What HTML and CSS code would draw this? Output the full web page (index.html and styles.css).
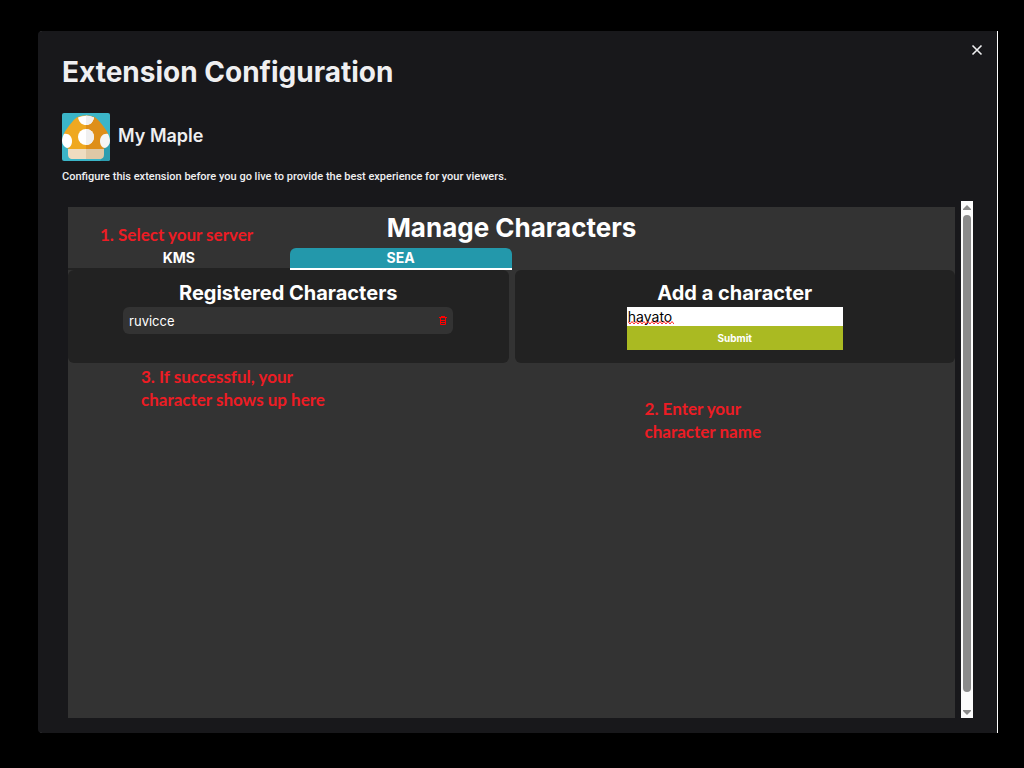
FILE: index.html
```html
<!DOCTYPE html>
<html lang="en">
<head>
<meta charset="utf-8">
<meta name="viewport" content="width=device-width, initial-scale=1">
<title>Extension Configuration</title>
<link rel="stylesheet" href="styles.css">
</head>
<body>
<main class="modal">
  <button class="close" type="button" aria-label="Close">
    <svg viewBox="0 0 12 12" width="12" height="12"><path d="M1.500 1.500l9 9M10.500 1.500l-9 9" stroke="#efeff1" stroke-width="1.600" fill="none"/></svg>
  </button>
  <h1 class="title">Extension Configuration</h1>
  <div class="extension">
    <svg class="logo" viewBox="0 0 48 48" role="img" aria-label="My Maple logo">
      <defs><clipPath id="cap"><path d="M24 2.500C18 2.500 14 4 10.500 8.500C7 13 3 17 1 23C0 29 3 36 8 36H40C45 36 48 29 47 23C45 17 41 13 37.500 8.500C34 4 30 2.500 24 2.500Z"/></clipPath></defs>
      <rect width="48" height="48" fill="#3bb5c8"/>
      <path d="M41 36L48 30V48H38L42 42Z" fill="#2c9db0"/>
      <g clip-path="url(#cap)">
        <rect width="24" height="36" fill="#efa820"/>
        <rect x="24" width="24" height="36" fill="#de8f1a"/>
      </g>
      <path d="M16 4.500Q24 1 32 4.500C31 9.500 28 12 24 12S17 9.500 16 4.500Z" fill="#fff"/>
      <path d="M24 2.500Q28 2.500 32 4.500C31 9.500 28 12 24 12Z" fill="#f0f0f0"/>
      <circle cx="24" cy="24" r="8" fill="#fff"/>
      <path d="M24 16a8 8 0 0 1 0 16z" fill="#f0f0f0"/>
      <path d="M2 21C7 20 10 24 10 28S8 35 5 35C2 34 0 31 0 28C0 25 1 23 2 21Z" fill="#fff"/>
      <path d="M46 21C41 20 38 24 38 28S40 35 43 35C46 34 48 31 48 28C48 25 47 23 46 21Z" fill="#f5f5f5"/>
      <path d="M6 36H24V46H11C7 46 6 44 6 41Z" fill="#efdcc0"/>
      <path d="M24 36H42V41C42 44 41 46 37 46H24Z" fill="#dfc8a6"/>
    </svg>
    <h2 class="name">My Maple</h2>
  </div>
  <p class="description">Configure this extension before you go live to provide the best experience for your viewers.</p>
  <div class="viewport">
    <section class="manager">
      <h2 class="heading">Manage Characters</h2>
      <nav class="tabs">
        <button class="tab" type="button">KMS</button>
        <button class="tab tab-active" type="button">SEA</button>
      </nav>
      <div class="cards">
        <section class="card">
          <h3 class="card-title">Registered Characters</h3>
          <div class="character">
            <span>ruvicce</span>
            <button class="delete" type="button" aria-label="Delete ruvicce">
              <svg viewBox="0 0 8 9" width="8" height="9"><path d="M0 1.500H8M2 .5H6M1.500 2V8.500H6.500V2M2 4.500H6M2 6.500H6" stroke="#f00" fill="none"/></svg>
            </button>
          </div>
        </section>
        <section class="card">
          <h3 class="card-title"><label for="character-name">Add a character</label></h3>
          <form class="form">
            <input class="field" id="character-name" type="text" value="hayato">
            <svg class="squiggle" viewBox="0 0 46 4" width="46" height="4" aria-hidden="true"><path d="M0 .5L2 3L4 .5L6 3L8 .5L10 3L12 .5L14 3L16 .5L18 3L20 .5L22 3L24 .5L26 3L28 .5L30 3L32 .5L34 3L36 .5L38 3L40 .5L42 3L44 .5L46 3" stroke="#f22" fill="none"/></svg>
            <button class="submit" type="button">Submit</button>
          </form>
        </section>
      </div>
      <p class="note note-server">1. Select your server</p>
      <p class="note note-name">2. Enter your<br>character name</p>
      <p class="note note-result">3. If successful, your<br>character shows up here</p>
    </section>
    <div class="scrollbar" aria-hidden="true">
      <svg viewBox="0 0 8 6" width="8" height="6"><path d="M4 0L8 4V5H0V4Z" fill="#8b8b8b"/></svg>
      <div class="thumb"></div>
      <svg viewBox="0 0 8 6" width="8" height="6"><path d="M4 6L8 2V1H0V2Z" fill="#8b8b8b"/></svg>
    </div>
  </div>
</main>
</body>
</html>
```

FILE: styles.css
```css
* { box-sizing: border-box; }
body {
  margin: 0;
  min-height: 100vh;
  display: flex;
  padding: 31px 27px 35px 38px;
  background: #000;
  color: #efeff1;
  font-family: Inter, sans-serif;
}
h1, h2, h3, p { margin: 0; }
button, input { margin: 0; border: 0; font-family: inherit; }
button { padding: 0; background: none; color: inherit; cursor: pointer; }
svg { display: block; }

.modal {
  position: relative;
  flex: 1;
  display: flex;
  flex-direction: column;
  padding: 24px 24px 15px;
  background: #18181b;
  border-radius: 4px 0 0 4px;
  box-shadow: 1px 0 #fff;
}
.close { position: absolute; top: 13px; right: 14px; }
.title { font-size: 28px; line-height: 34px; font-weight: 700; }
.extension { display: flex; align-items: center; gap: 8px; margin-top: 24px; }
.logo { width: 48px; height: 48px; border-radius: 2px; }
.name { font-size: 18px; line-height: 24px; font-weight: 600; padding-bottom: 3px; }
.description {
  margin-top: 8px;
  font-family: Roboto, sans-serif;
  font-size: 11px;
  line-height: 16px;
  font-weight: 500;
}

.viewport { flex: 1; display: flex; gap: 6px; margin-top: 16px; }
.manager {
  position: relative;
  flex: 1;
  margin: 6px 0 0 6px;
  background: #333;
  color: #fff;
}
.heading { padding-top: 4px; font-size: 26px; line-height: 33px; text-align: center; }
.tabs { display: grid; grid-template-columns: repeat(4, 1fr); margin-top: 4px; }
.tab {
  height: 22px;
  border-bottom: 2px solid #222;
  font-size: 14px;
  line-height: 20px;
  font-weight: 700;
}
.tab-active { background: #2398ab; border-color: #fff; border-radius: 6px 6px 0 0; }
.cards { display: grid; grid-template-columns: 1fr 1fr; gap: 6px; }
.card { padding: 9px 0 13px; background: #222; border-radius: 6px; }
.card-title { font-size: 20px; line-height: 28px; text-align: center; }
.character {
  display: flex;
  align-items: center;
  justify-content: space-between;
  width: 75%;
  height: 27px;
  margin: 0 auto;
  padding: 0 6px;
  background: #333;
  border-radius: 6px;
  font-size: 13px;
}
.form { position: relative; display: flex; flex-direction: column; width: 49%; margin: 0 auto; }
.field {
  width: 100%;
  height: 19px;
  padding: 0 1px 1px;
  background: #fff;
  color: #000;
  font-size: 14px;
  outline: 0;
}
.squiggle { position: absolute; top: 14px; left: 1px; }
.submit { height: 24px; background: #aaba22; font-size: 10px; font-weight: 700; }

.note {
  position: absolute;
  color: #ed1c24;
  font-family: Lato, sans-serif;
  font-size: 17px;
  line-height: 23px;
  font-weight: 700;
  white-space: nowrap;
}
.note-server { top: 16px; left: 32px; }
.note-name { top: 190px; left: 65%; }
.note-result { top: 158px; left: 73px; }

.scrollbar {
  display: flex;
  flex-direction: column;
  align-items: center;
  width: 12px;
  padding: 4px 0 3px;
  background: #fcfcfc;
}
.thumb { flex: 1; width: 8px; margin: 4px 0 17px; background: #8b8b8b; border-radius: 4px; }
```
